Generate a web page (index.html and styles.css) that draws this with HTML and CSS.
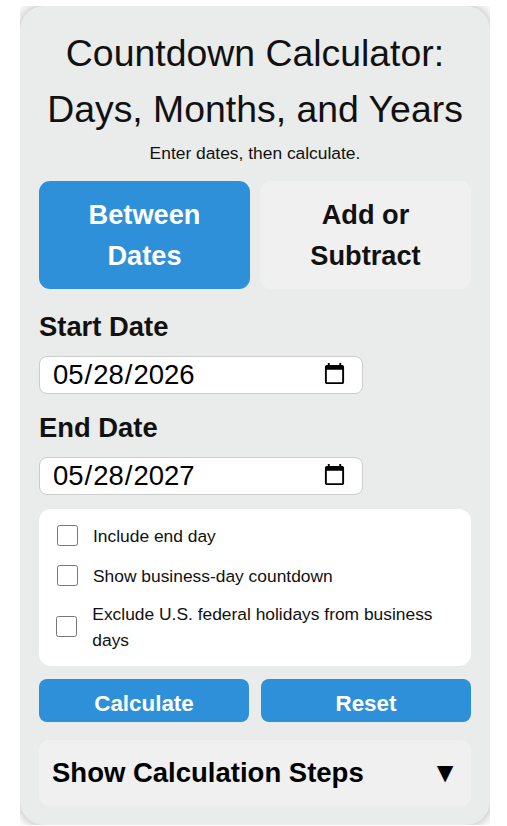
FILE: index.html
```html
<!DOCTYPE html>
<html lang="en">
<head>
  <meta charset="UTF-8">
  <title>Countdown Calculator</title>
  <meta name="viewport" content="width=device-width, initial-scale=1">
  <link rel="stylesheet" href="styles.css">
</head>
<body>
  <div class="frame">
    <div class="container">
      <h1>Countdown Calculator: Days, Months, and Years</h1>
      <p class="intro">Enter dates, then calculate.</p>

      <div class="tabs">
        <button class="tab active">Between Dates</button>
        <button class="tab">Add or Subtract</button>
      </div>

      <label class="field-label" for="start">Start Date</label>
      <input class="date-input" type="date" id="start" value="2026-05-28">

      <label class="field-label" for="end">End Date</label>
      <input class="date-input" type="date" id="end" value="2027-05-28">

      <div class="options">
        <label class="option"><input type="checkbox"><span>Include end day</span></label>
        <label class="option"><input type="checkbox"><span>Show business-day countdown</span></label>
        <label class="option wrapped"><input type="checkbox"><span>Exclude U.S. federal holidays from business days</span></label>
      </div>

      <div class="actions">
        <button class="action">Calculate</button>
        <button class="action">Reset</button>
      </div>

      <div class="steps">
        <span>Show Calculation Steps</span>
        <span class="arrow">▼</span>
      </div>
    </div>
  </div>
</body>
</html>
```

FILE: styles.css
```css
html, body {
  height: 826px;
  overflow: hidden;
}
body {
  font-family: "Liberation Sans", Arial, sans-serif;
  background: white;
  margin: 0;
  padding: 6px 17px 0 20px;
  color: #111;
}
.frame {
  height: 819px;
  overflow: hidden;
}
.container {
  height: 819px;
  box-sizing: border-box;
  padding: 19px;
  background: #eaebeb;
  border-radius: 24px;
  box-shadow: 0 0 14px rgba(0,0,0,0.35);
}
h1 {
  margin: 0;
  font-size: 37.4px;
  font-weight: normal;
  line-height: 56px;
  text-align: center;
}
.intro {
  margin: 4px 0 0;
  font-size: 17.4px;
  line-height: 24px;
  text-align: center;
}
.tabs {
  display: flex;
  gap: 10px;
  margin-top: 16px;
}
.tab {
  flex: 1;
  height: 108px;
  padding: 10px 30px;
  border: none;
  border-radius: 11px;
  background: #f0f0f0;
  color: #111;
  font-family: inherit;
  font-size: 27.2px;
  font-weight: bold;
  line-height: 41px;
}
.tab.active {
  background: #2d90d9;
  color: white;
}
.field-label {
  display: block;
  margin: 21px 0 12px;
  font-size: 27.4px;
  font-weight: bold;
  line-height: 34px;
}
.date-input + .field-label {
  margin-top: 17.5px;
}
.date-input {
  display: block;
  width: 324px;
  height: 37.5px;
  box-sizing: border-box;
  padding: 0 15px 0 12px;
  border: 1px solid #ccc;
  border-radius: 8px;
  background: white;
  color: #000;
  font-family: inherit;
  font-size: 27.5px;
}
.date-input::-webkit-calendar-picker-indicator {
  width: 25px;
  height: 25px;
  padding: 0;
  margin: 0;
}
.options {
  margin-top: 14.5px;
  padding: 6.5px 17.7px 13.5px;
  background: white;
  border-radius: 12px;
}
.option {
  display: flex;
  align-items: center;
  gap: 15.3px;
  font-size: 17.4px;
  line-height: 26px;
  padding: 7px 0;
}
.option.wrapped {
  margin-left: -0.7px;
  padding: 5px 0 0;
}
.option input {
  flex: none;
  width: 21px;
  height: 21px;
  margin: 0;
  accent-color: #2d90d9;
}
.actions {
  display: flex;
  gap: 12px;
  margin-top: 13px;
}
.action {
  flex: 1;
  height: 43px;
  padding: 6px 0 0;
  border: none;
  border-radius: 8px;
  background: #2d90d9;
  color: white;
  font-family: inherit;
  font-size: 22.4px;
  font-weight: bold;
}
.steps {
  display: flex;
  justify-content: space-between;
  align-items: center;
  height: 66px;
  box-sizing: border-box;
  margin-top: 18px;
  padding: 0 12px 0 13px;
  background: #f0f0f0;
  border-radius: 10px;
  color: #000;
  font-size: 27.5px;
  font-weight: bold;
}
.arrow {
  font-size: 28px;
}
```
